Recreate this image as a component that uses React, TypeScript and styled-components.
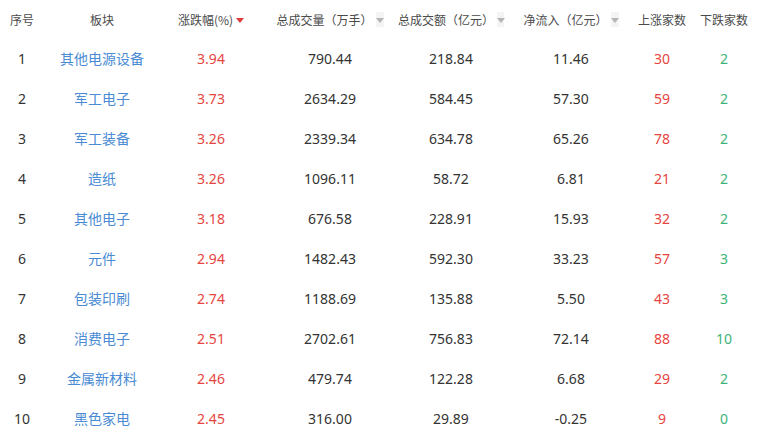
import React from 'react';
import styled, { createGlobalStyle } from 'styled-components';

const GlobalStyle = createGlobalStyle`
  html, body {
    margin: 0;
    padding: 0;
    background: #fff;
  }
  body {
    font-family: "Noto Sans", "Noto Sans CJK SC", sans-serif;
  }
`;

interface Row {
  name: string;
  pct: string;
  vol: string;
  amount: string;
  flow: string;
  up: number;
  down: number;
}

const rows: Row[] = [
  { name: '其他电源设备', pct: '3.94', vol: '790.44', amount: '218.84', flow: '11.46', up: 30, down: 2 },
  { name: '军工电子', pct: '3.73', vol: '2634.29', amount: '584.45', flow: '57.30', up: 59, down: 2 },
  { name: '军工装备', pct: '3.26', vol: '2339.34', amount: '634.78', flow: '65.26', up: 78, down: 2 },
  { name: '造纸', pct: '3.26', vol: '1096.11', amount: '58.72', flow: '6.81', up: 21, down: 2 },
  { name: '其他电子', pct: '3.18', vol: '676.58', amount: '228.91', flow: '15.93', up: 32, down: 2 },
  { name: '元件', pct: '2.94', vol: '1482.43', amount: '592.30', flow: '33.23', up: 57, down: 3 },
  { name: '包装印刷', pct: '2.74', vol: '1188.69', amount: '135.88', flow: '5.50', up: 43, down: 3 },
  { name: '消费电子', pct: '2.51', vol: '2702.61', amount: '756.83', flow: '72.14', up: 88, down: 10 },
  { name: '金属新材料', pct: '2.46', vol: '479.74', amount: '122.28', flow: '6.68', up: 29, down: 2 },
  { name: '黑色家电', pct: '2.45', vol: '316.00', amount: '29.89', flow: '-0.25', up: 9, down: 0 },
];

const COLS = '44px 116px 102px 136px 106px 134px 48px 76px';

const Table = styled.div`
  width: 762px;
`;

const HeadRow = styled.div`
  display: grid;
  grid-template-columns: ${COLS};
  height: 38px;
  align-items: center;
`;

const BodyRow = styled.div`
  display: grid;
  grid-template-columns: ${COLS};
  height: 40px;
  align-items: center;
`;

const HeadCell = styled.div`
  display: flex;
  justify-content: center;
  align-items: center;
  gap: 3px;
  font-family: "Noto Sans CJK SC", sans-serif;
  font-size: 12px;
  color: #4a4a4a;
  white-space: nowrap;
`;

const SortBox = styled.span<{ $active?: boolean }>`
  position: relative;
  display: inline-block;
  width: 8px;
  height: 15px;
  background: ${(p) => (p.$active ? 'transparent' : '#f4f4f4')};
  &::after {
    content: '';
    position: absolute;
    left: 0;
    top: 6px;
    border-left: 4px solid transparent;
    border-right: 4px solid transparent;
    border-top: 5px solid ${(p) => (p.$active ? '#e03c3c' : '#b5b5b5')};
  }
`;

type Tone = 'plain' | 'link' | 'up' | 'down';

const toneColor: Record<Tone, string> = {
  plain: '#333333',
  link: '#4a8bd4',
  up: '#e5453f',
  down: '#3db37a',
};

const Cell = styled.div<{ $tone?: Tone }>`
  text-align: center;
  font-size: 14px;
  color: ${(p) => toneColor[p.$tone || 'plain']};
  white-space: nowrap;
`;

const NameCell = styled(Cell)`
  font-family: "Noto Sans CJK SC", sans-serif;
`;

export default function App() {
  return (
    <>
      <GlobalStyle />
      <Table>
        <HeadRow>
          <HeadCell>序号</HeadCell>
          <HeadCell>板块</HeadCell>
          <HeadCell>
            涨跌幅(%)
            <SortBox $active />
          </HeadCell>
          <HeadCell>
            总成交量（万手）
            <SortBox />
          </HeadCell>
          <HeadCell>
            总成交额（亿元）
            <SortBox />
          </HeadCell>
          <HeadCell>
            净流入（亿元）
            <SortBox />
          </HeadCell>
          <HeadCell>上涨家数</HeadCell>
          <HeadCell>下跌家数</HeadCell>
        </HeadRow>
        {rows.map((r, i) => (
          <BodyRow key={r.name}>
            <Cell>{i + 1}</Cell>
            <NameCell $tone="link">{r.name}</NameCell>
            <Cell $tone="up">{r.pct}</Cell>
            <Cell>{r.vol}</Cell>
            <Cell>{r.amount}</Cell>
            <Cell>{r.flow}</Cell>
            <Cell $tone="up">{r.up}</Cell>
            <Cell $tone="down">{r.down}</Cell>
          </BodyRow>
        ))}
      </Table>
    </>
  );
}
